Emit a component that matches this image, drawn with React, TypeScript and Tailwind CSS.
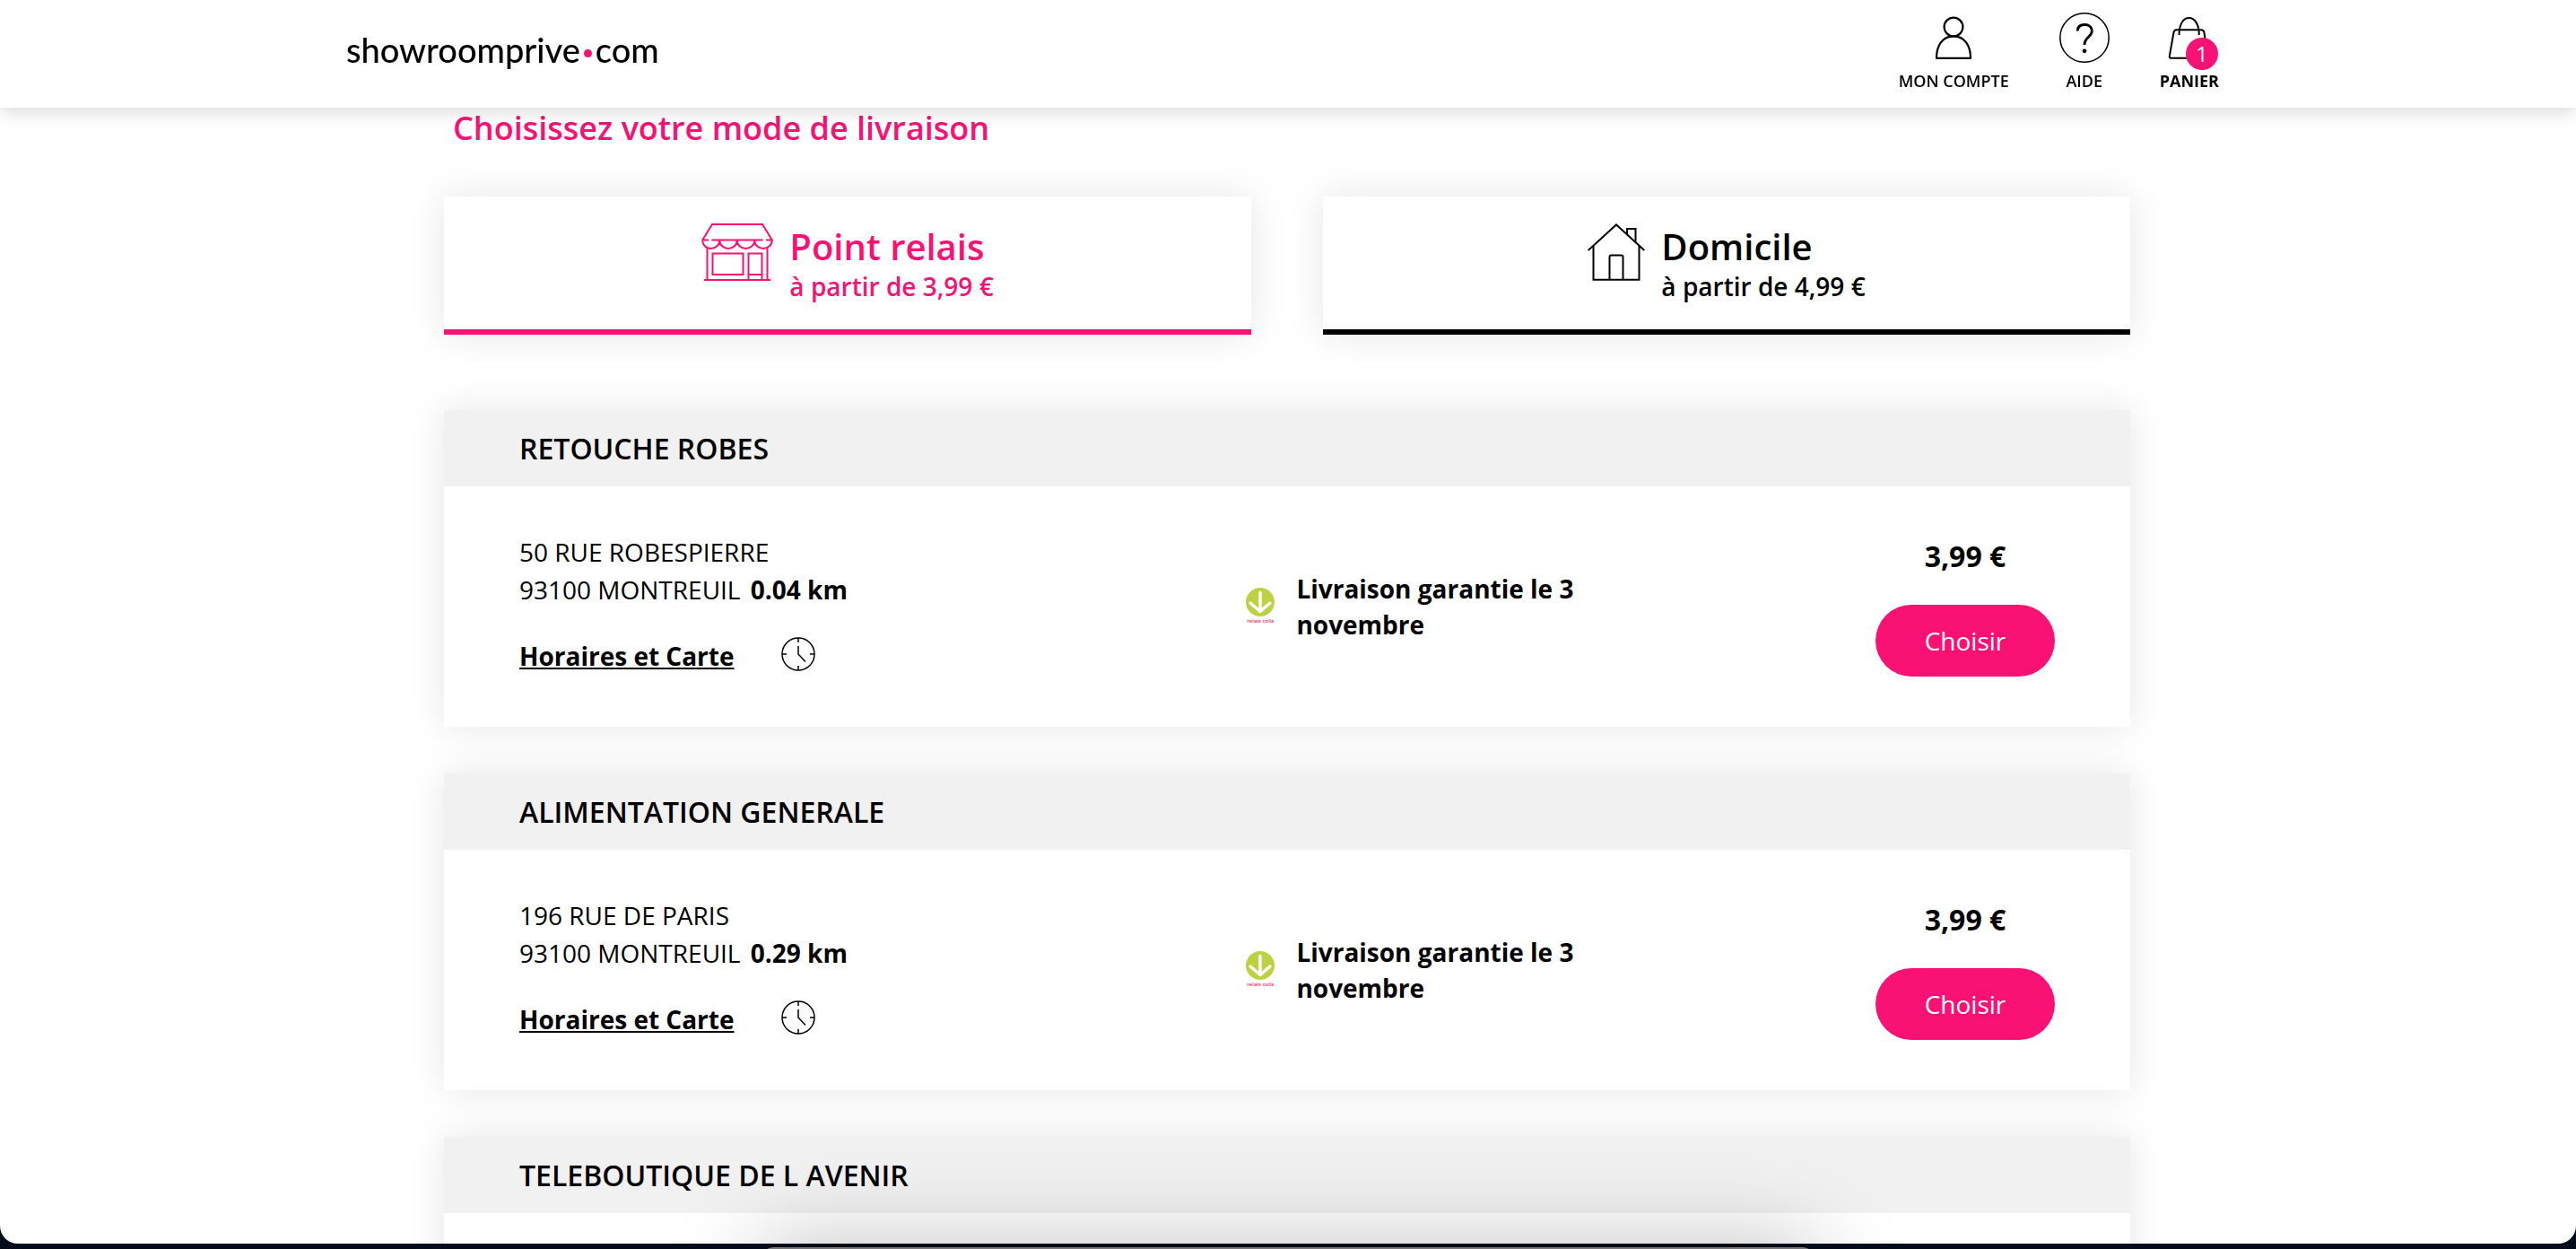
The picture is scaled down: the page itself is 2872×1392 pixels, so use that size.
import type { ReactNode } from "react";

type RelayPoint = {
  name: string;
  details?: {
    street: string;
    city: string;
    distance: string;
    price: string;
  };
};

const relayPoints: RelayPoint[] = [
  {
    name: "RETOUCHE ROBES",
    details: { street: "50 RUE ROBESPIERRE", city: "93100 MONTREUIL", distance: "0.04 km", price: "3,99 €" },
  },
  {
    name: "ALIMENTATION GENERALE",
    details: { street: "196 RUE DE PARIS", city: "93100 MONTREUIL", distance: "0.29 km", price: "3,99 €" },
  },
  { name: "TELEBOUTIQUE DE L AVENIR" },
];

function AccountIcon() {
  return (
    <svg className="h-14 w-14" viewBox="0 0 56 56" fill="none" stroke="currentColor" strokeWidth="2.2" strokeLinejoin="round">
      <circle cx="28" cy="16" r="10.4" />
      <path d="M28 26.4C15.5 26.4 9 37 9 50.8H47C47 37 40.5 26.4 28 26.4Z" />
    </svg>
  );
}

function HelpIcon() {
  return (
    <svg className="h-14 w-14" viewBox="0 0 56 56" fill="none" stroke="currentColor">
      <circle cx="28" cy="28" r="27.2" strokeWidth="1.5" />
      <path d="M20.3 20.5C20.3 16 23.4 13.5 28.3 13.5C33 13.5 36.3 16.2 36.3 20.6C36.3 27.5 28 27 28 36" strokeWidth="2.8" />
      <circle cx="28" cy="42.8" r="2.4" fill="currentColor" stroke="none" />
    </svg>
  );
}

function BagIcon() {
  return (
    <svg className="h-14 w-14" viewBox="0 0 56 56" fill="none" stroke="currentColor" strokeWidth="2" strokeLinejoin="round">
      <path d="M13.5 19.3H41C43 19.3 44 20 44.4 22L48.500 50.8H7.5C6 50.8 5.500 50 5.800 48.5L10.5 22C11 20 11.8 19.3 13.5 19.3Z" />
      <path d="M16.5 25C16.5 14 20.5 6 27.500 6S38.800 14 38.800 25" />
    </svg>
  );
}

function ShopIcon() {
  return (
    <svg className="h-16 w-20" viewBox="0 0 80 64" fill="none" stroke="currentColor" strokeWidth="2">
      <path d="M1.5 18L12 1H68L78.5 18M0.5 18.5H8M11.5 18.5H68.5M72 18.5H79.5" />
      <path d="M1.2 18.5C1.2 24 5 28 10.5 28S20.3 24 20.3 18.5C20.3 24 24.5 28 30 28S39.7 24 39.7 18.5C39.7 24 44 28 49.5 28S59.2 24 59.2 18.5C59.2 24 63.5 28 69 28S78.8 24 78.8 18.5" />
      <path d="M6.5 28V63M73.5 28V63M3 63H77" />
      <path d="M12.5 33.5H46.5V57H12.5ZM52.5 63V33.5H67.5V63M52.5 57H67.5" />
    </svg>
  );
}

function HouseIcon() {
  return (
    <svg className="h-16 w-16" viewBox="0 0 64 64" fill="none" stroke="currentColor" strokeWidth="2">
      <path d="M0.7 30L32 1.4L63.3 30" />
      <path d="M6.5 25V62.8H57.5V25" />
      <path d="M44 12V6H53.5V21" />
      <path d="M24.5 62V37.5C24.5 36.2 25 35.5 26.5 35.5H37.5C39 35.5 39.5 36.2 39.5 37.5V62" />
    </svg>
  );
}

function ClockIcon() {
  return (
    <svg className="h-[38px] w-[38px]" viewBox="0 0 38 38" fill="none" stroke="currentColor" strokeWidth="1.5">
      <circle cx="19" cy="19" r="18" />
      <path d="M19 1V6M19 32V37M1 19H6M32 19H37M19 10V19L27 27.5" />
    </svg>
  );
}

function RelaisColisLogo() {
  return (
    <div className="flex w-10 flex-col items-center">
      <svg className="h-8 w-8" viewBox="0 0 32 32" fill="none">
        <circle cx="16" cy="16" r="16" fill="#bdd243" />
        <path d="M16 5.5V26M5 17L16 26.5L27 17" stroke="#fff" strokeWidth="3.4" strokeLinecap="round" strokeLinejoin="round" />
      </svg>
      <span className="text-[6px] leading-[10px] font-semibold whitespace-nowrap text-[#e5305c]">relais colis</span>
    </div>
  );
}

function NavItem({ icon, label, bold, count }: { icon: ReactNode; label: string; bold?: boolean; count?: number }) {
  return (
    <a href="#" className="flex flex-col items-center">
      <div className="relative">
        {icon}
        {count && (
          <span className="absolute -right-1 -bottom-2 flex h-9 w-9 items-center justify-center rounded-full bg-[#f91174] text-2xl text-white">
            {count}
          </span>
        )}
      </div>
      <span className={`mt-2 text-lg leading-6 ${bold ? "font-bold" : "font-semibold"}`}>{label}</span>
    </a>
  );
}

function Header() {
  return (
    <header className="sticky top-0 z-20 h-[120px] bg-white shadow-[0_4px_20px_rgba(0,0,0,0.16)]">
      <div className="mx-auto flex max-w-[2100px] items-start justify-between pt-3.5 pr-3">
        <a href="#" className="mt-4 flex items-center font-[Lato,sans-serif] text-[38px] leading-[50px] font-medium">
          showroomprive
          <span className="mx-1 mt-2 h-[9px] w-[9px] rounded-full bg-[#f91174]" />
          com
        </a>
        <nav className="flex gap-14">
          <NavItem icon={<AccountIcon />} label="MON COMPTE" />
          <NavItem icon={<HelpIcon />} label="AIDE" />
          <NavItem icon={<BagIcon />} label="PANIER" bold count={1} />
        </nav>
      </div>
    </header>
  );
}

function DeliveryMode({ icon, title, price, active }: { icon: ReactNode; title: string; price: string; active?: boolean }) {
  return (
    <button
      className={`flex flex-1 items-start justify-center gap-[18px] border-b-6 bg-white py-[30px] text-left font-semibold shadow-[0_0_40px_rgba(0,0,0,0.1)] ${
        active ? "border-[#f91174] text-[#f91174]" : "border-black text-black"
      }`}
    >
      {icon}
      <span>
        <span className="block text-[40px] leading-[52px]">{title}</span>
        <span className="block text-[28px] leading-9">{price}</span>
      </span>
    </button>
  );
}

function RelayCard({ name, details }: RelayPoint) {
  return (
    <article className="bg-white shadow-[0_0_40px_rgba(0,0,0,0.1)]">
      <h2 className="bg-[#f1f1f1] px-[84px] text-[32px] leading-[85px] font-semibold">{name}</h2>
      {details ? (
        <div className="grid grid-cols-[8fr_7fr_200px] items-center px-[84px] py-[52px] text-[28px] leading-[42px]">
          <div className="pb-1.5">
            <p>{details.street}</p>
            <p>
              {details.city} <b className="ml-1">{details.distance}</b>
            </p>
            <div className="mt-8 flex items-start gap-[52px]">
              <a href="#" className="font-bold underline">
                Horaires et Carte
              </a>
              <ClockIcon />
            </div>
          </div>
          <div className="flex items-center gap-5">
            <RelaisColisLogo />
            <p className="max-w-[340px] leading-10 font-bold">Livraison garantie le 3 novembre</p>
          </div>
          <div className="flex flex-col items-center gap-8">
            <p className="text-[32px] leading-[44px] font-bold">{details.price}</p>
            <button className="h-20 w-full rounded-full bg-[#f91174] text-[28px] text-white">Choisir</button>
          </div>
        </div>
      ) : (
        <div className="h-[268px]" />
      )}
    </article>
  );
}

function App() {
  return (
    <div className="relative h-screen overflow-hidden bg-[#020c1b] pb-1.5 font-['Open_Sans',sans-serif] text-black">
      <div className="relative h-full overflow-hidden rounded-b-[20px] bg-white">
        <Header />
        <main className="mx-auto max-w-[1882px] pr-0.5">
          <h1 className="pl-2.5 text-4xl leading-[46px] font-semibold text-[#f91174]">Choisissez votre mode de livraison</h1>
          <div className="mt-[53px] flex gap-20">
            <DeliveryMode icon={<ShopIcon />} title="Point relais" price="à partir de 3,99 €" active />
            <DeliveryMode icon={<HouseIcon />} title="Domicile" price="à partir de 4,99 €" />
          </div>
          <section className="mt-[84px] flex flex-col gap-[52px]">
            {relayPoints.map((point) => (
              <RelayCard key={point.name} {...point} />
            ))}
          </section>
        </main>
      </div>
      {/* top edge of the panel that slides up from the bottom */}
      <div className="absolute inset-x-0 -bottom-20 z-30 mx-auto h-[82px] w-[41%] rounded-[16px] bg-[#77777b] shadow-[0_0_100px_rgba(0,0,0,0.28)]" />
    </div>
  );
}

export default App;
